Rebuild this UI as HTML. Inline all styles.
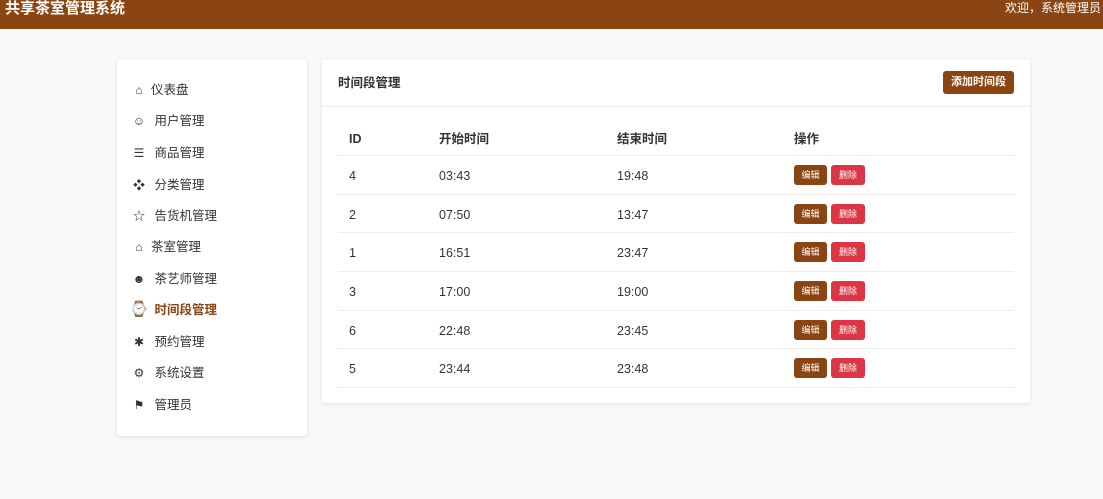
<!DOCTYPE html>
<html><head><meta charset="utf-8"><style>
*{margin:0;padding:0;box-sizing:border-box}
body{width:1103px;height:499px;background:#f7f8f7;font-family:"Liberation Sans","Noto Sans CJK SC",sans-serif;color:#333;position:relative;overflow:hidden}
.top{position:absolute;left:0;top:0;width:1103px;height:29px;background:#8b4513;color:#fff}
.top .t{position:absolute;left:5px;top:0px;font-size:15px;line-height:18px;font-weight:bold}
.top .u{position:absolute;right:2px;top:0px;font-size:12px;line-height:16px}
.side{position:absolute;left:117px;top:60px;width:190px;height:376px;background:#fff;border-radius:3px;box-shadow:0 1px 4px rgba(0,0,0,.1)}
.it{position:absolute;left:12px;font-size:12.5px;color:#333;height:20px;line-height:20px}
.it i{font-style:normal;display:inline-block;width:20px;font-size:12px;text-align:center;margin-right:2px}
.it.a{color:#8b4513;font-weight:bold}
.main{position:absolute;left:322px;top:60px;width:708px;height:343px;background:#fff;border-radius:3px;box-shadow:0 1px 4px rgba(0,0,0,.1)}
.hd{position:absolute;left:0;top:0;width:708px;height:47px;border-bottom:1px solid #eee}
.hd .ti{position:absolute;left:16px;top:14px;font-size:12.5px;line-height:18px;font-weight:bold}
.add{position:absolute;left:621px;top:11px;width:71px;height:23px;background:#8b4513;color:#fff;font-size:11px;font-weight:bold;border-radius:3px;text-align:center;line-height:23px}
.row{position:absolute;left:16px;width:676px;border-bottom:1px solid #eee;font-size:12.5px}
.row span{position:absolute;line-height:18px}
.b{position:absolute;height:20px;line-height:20px!important;font-size:9px;color:#fff;border-radius:3px;text-align:center}
</style></head><body>
<div class="top"><div class="t">共享茶室管理系统</div><div class="u">欢迎，系统管理员</div></div>
<div class="side">
<div class="it" style="top:20px"><i>⌂</i>仪表盘</div>
<div class="it" style="top:51px"><i>☺</i> 用户管理</div>
<div class="it" style="top:83px"><i>☰</i> 商品管理</div>
<div class="it" style="top:115px"><i>❖</i> 分类管理</div>
<div class="it" style="top:146px"><i>☆</i> 告货机管理</div>
<div class="it" style="top:177px"><i>⌂</i>茶室管理</div>
<div class="it" style="top:209px"><i>☻</i> 茶艺师管理</div>
<div class="it a" style="top:240px"><i style="font-size:15px">⌚</i> 时间段管理</div>
<div class="it" style="top:272px"><i>✱</i> 预约管理</div>
<div class="it" style="top:303px"><i>⚙</i> 系统设置</div>
<div class="it" style="top:335px"><i>⚑</i> 管理员</div>
</div>
<div class="main">
<div class="hd"><div class="ti">时间段管理</div><div class="add">添加时间段</div></div>
<div class="row" style="top:60px;height:36px;font-weight:bold"><span style="left:11px;top:10px">ID</span><span style="left:101px;top:10px">开始时间</span><span style="left:279px;top:10px">结束时间</span><span style="left:456px;top:10px">操作</span></div>
<div class="row" style="top:96px;height:39px"><span style="left:11px;top:11px">4</span><span style="left:101px;top:11px">03:43</span><span style="left:279px;top:11px">19:48</span><span class="b" style="left:456px;top:9px;width:33px;background:#8b4513">编辑</span><span class="b" style="left:493px;top:9px;width:34px;background:#dc3545">删除</span></div>
<div class="row" style="top:135px;height:38px"><span style="left:11px;top:11px">2</span><span style="left:101px;top:11px">07:50</span><span style="left:279px;top:11px">13:47</span><span class="b" style="left:456px;top:9px;width:33px;background:#8b4513">编辑</span><span class="b" style="left:493px;top:9px;width:34px;background:#dc3545">删除</span></div>
<div class="row" style="top:173px;height:39px"><span style="left:11px;top:11px">1</span><span style="left:101px;top:11px">16:51</span><span style="left:279px;top:11px">23:47</span><span class="b" style="left:456px;top:9px;width:33px;background:#8b4513">编辑</span><span class="b" style="left:493px;top:9px;width:34px;background:#dc3545">删除</span></div>
<div class="row" style="top:212px;height:39px"><span style="left:11px;top:11px">3</span><span style="left:101px;top:11px">17:00</span><span style="left:279px;top:11px">19:00</span><span class="b" style="left:456px;top:9px;width:33px;background:#8b4513">编辑</span><span class="b" style="left:493px;top:9px;width:34px;background:#dc3545">删除</span></div>
<div class="row" style="top:251px;height:38px"><span style="left:11px;top:11px">6</span><span style="left:101px;top:11px">22:48</span><span style="left:279px;top:11px">23:45</span><span class="b" style="left:456px;top:9px;width:33px;background:#8b4513">编辑</span><span class="b" style="left:493px;top:9px;width:34px;background:#dc3545">删除</span></div>
<div class="row" style="top:289px;height:39px"><span style="left:11px;top:11px">5</span><span style="left:101px;top:11px">23:44</span><span style="left:279px;top:11px">23:48</span><span class="b" style="left:456px;top:9px;width:33px;background:#8b4513">编辑</span><span class="b" style="left:493px;top:9px;width:34px;background:#dc3545">删除</span></div>
</div>
</body></html>
